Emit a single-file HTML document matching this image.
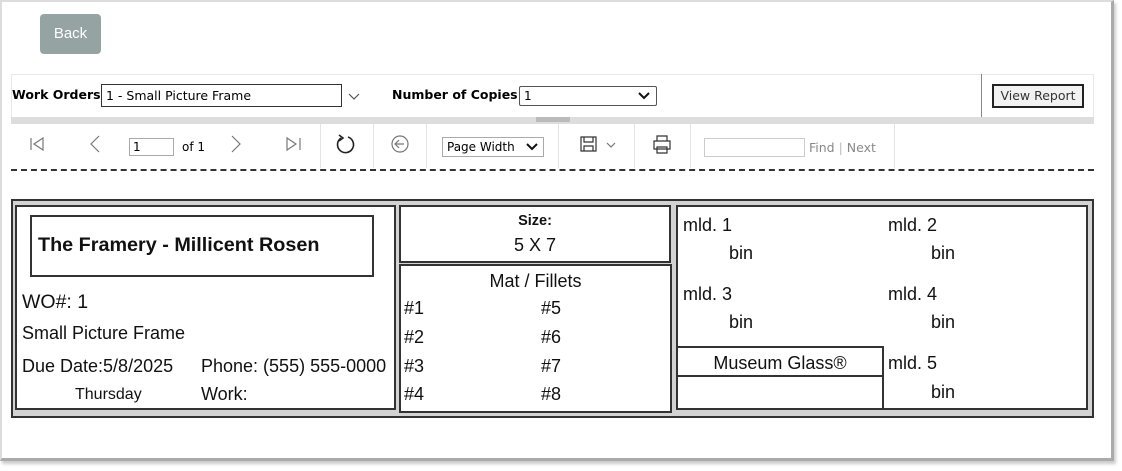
<!DOCTYPE html>
<html><head><style>
*{margin:0;padding:0;box-sizing:border-box}
body{width:1122px;height:471px;background:#fff;position:relative;overflow:hidden;font-family:"Liberation Sans",sans-serif}
.a{position:absolute}
.t{font-family:"DejaVu Sans","Liberation Sans",sans-serif;font-size:12px;color:#000}
.b{border:2px solid #333;background:#fff}
.r{font-family:"Liberation Sans",Arial,sans-serif;font-size:18px;color:#111;position:absolute;white-space:nowrap}
.sep{position:absolute;top:124px;width:1px;height:44px;background:#e4e4e4}
</style></head><body>
<div class="a" style="left:0;top:0;width:1114px;height:461px;border:2px solid #dcdcdc;border-right:3px solid #aaa;border-bottom:3px solid #aaa;box-shadow:2px 3px 3px #ccc"></div>
<div class="a" style="left:40px;top:14px;width:61px;height:40px;background:#95a3a3;border-radius:4px;color:#fff;font-size:15px;text-align:center;line-height:40px">Back</div>

<div class="a" style="left:11px;top:74px;width:1083px;height:45px;border:1px solid #e8e8e8;border-bottom:none"></div>
<div class="a" style="left:11px;top:117px;width:1083px;height:7px;background:#ddd"></div>
<div class="a" style="left:536px;top:117px;width:34px;height:5px;background:#bbb"></div>
<div class="a" style="left:981px;top:74px;width:1px;height:43px;background:#888"></div>
<div class="a t" style="left:12px;top:87px;font-weight:bold;font-size:12.5px">Work Orders</div>
<div class="a t" style="left:101px;top:84px;width:241px;height:23px;border:1px solid #333;padding:3px 4px;font-size:12.5px">1 - Small Picture Frame</div>
<svg class="a" style="left:347px;top:92px" width="14" height="10"><path d="M2 2l5 5 5-5" stroke="#555" fill="none" stroke-width="1.2"/></svg>
<div class="a t" style="left:392px;top:87px;font-weight:bold;font-size:12.5px">Number of Copies</div>
<div class="a t" style="left:519px;top:86px;width:138px;height:20px;border:1px solid #555;border-radius:2px;padding:2px 4px">1</div>
<svg class="a" style="left:637px;top:91px" width="14" height="10"><path d="M2 2l5 5 5-5" stroke="#111" fill="none" stroke-width="2"/></svg>
<div class="a t" style="left:992px;top:84px;width:92px;height:24px;border:2px solid #222;background:#f2f2f2;text-align:center;line-height:20px;color:#333;font-size:12.5px">View Report</div>

<div class="sep" style="left:320px"></div><div class="sep" style="left:373px"></div><div class="sep" style="left:426px"></div><div class="sep" style="left:558px"></div><div class="sep" style="left:634px"></div><div class="sep" style="left:690px"></div><div class="sep" style="left:894px"></div>
<svg class="a" style="left:0;top:124px" width="720" height="44">
<g stroke="#777" fill="none" stroke-width="1.2">
<path d="M31 14v12M43 14l-9 6 9 6z"/>
<path d="M99 12l-8 8 8 8"/>
<path d="M232 12l8 8-8 8"/>
<path d="M287 14l9 6-9 6zM300 14v12"/>
<circle cx="400" cy="20" r="8"/><path d="M404 20h-8M399 16l-4 4 4 4"/>
<path d="M581 13h15v14h-15zM584 13v5h9v-5M584 27v-5h9v5" stroke="#333"/>
<path d="M607 19l4 4 4-4"/>
<path d="M657 17v-5h10v5M654 17h16v8h-16zM657 23h10v6h-10z" stroke="#333"/>
</g>
<path d="M341 14a8 8 0 1 0 7 -1" stroke="#222" stroke-width="1.6" fill="none"/><path d="M339 11l4 3-4 3" stroke="#222" stroke-width="1.6" fill="none"/>
</svg>
<div class="a t" style="left:129px;top:138px;width:45px;height:18px;border:1px solid #aaa;padding:1px 3px">1</div>
<div class="a t" style="left:182px;top:140px">of 1</div>
<div class="a t" style="left:442px;top:137px;width:102px;height:20px;border:1px solid #aaa;padding:2px 4px">Page Width</div>
<svg class="a" style="left:525px;top:142px" width="14" height="10"><path d="M2 2l5 5 5-5" stroke="#111" fill="none" stroke-width="2"/></svg>
<div class="a t" style="left:704px;top:138px;width:101px;height:19px;border:1px solid #ccc"></div>
<div class="a t" style="left:809px;top:140px;color:#888;font-size:12.5px">Find <span style="color:#bbb">|</span> Next</div>
<div class="a" style="left:11px;top:169px;width:1083px;border-top:2px dashed #333"></div>

<div class="a" style="left:11px;top:199px;width:1083px;height:219px;background:#d3d3d3;border:2px solid #333"></div>
<div class="a b" style="left:15px;top:205px;width:381px;height:205px"></div>
<div class="a b" style="left:30px;top:215px;width:344px;height:62px;border-width:2px"></div>
<div class="r" style="left:38px;top:234px;font-weight:bold;font-size:19.8px">The Framery - Millicent Rosen</div>
<div class="r" style="left:22px;top:291px;font-size:19.5px">WO#: 1</div>
<div class="r" style="left:22px;top:323px">Small Picture Frame</div>
<div class="r" style="left:22px;top:356px">Due Date:5/8/2025</div>
<div class="r" style="left:201px;top:356px">Phone: (555) 555-0000</div>
<div class="r" style="left:75px;top:386px;font-size:16px">Thursday</div>
<div class="r" style="left:201px;top:384px">Work:</div>

<div class="a b" style="left:399px;top:205px;width:272px;height:58px"></div>
<div class="r" style="left:399px;top:213px;width:272px;text-align:center;font-weight:bold;font-size:14.5px">Size:</div>
<div class="r" style="left:399px;top:235px;width:272px;text-align:center">5 X 7</div>
<div class="a b" style="left:399px;top:264px;width:273px;height:149px"></div>
<div class="r" style="left:399px;top:271px;width:273px;text-align:center">Mat / Fillets</div>
<div class="r" style="left:404px;top:298px">#1</div><div class="r" style="left:541px;top:298px">#5</div>
<div class="r" style="left:404px;top:327px">#2</div><div class="r" style="left:541px;top:327px">#6</div>
<div class="r" style="left:404px;top:356px">#3</div><div class="r" style="left:541px;top:356px">#7</div>
<div class="r" style="left:404px;top:384px">#4</div><div class="r" style="left:541px;top:384px">#8</div>

<div class="a b" style="left:676px;top:205px;width:412px;height:205px"></div>
<div class="a" style="left:677px;top:346px;width:207px;height:63px;border-top:2px solid #333;border-right:2px solid #333"></div>
<div class="a" style="left:677px;top:375px;width:206px;height:2px;background:#333"></div>
<div class="r" style="left:677px;top:353px;width:206px;text-align:center">Museum Glass®</div>
<div class="r" style="left:683px;top:215px">mld. 1</div><div class="r" style="left:888px;top:215px">mld. 2</div>
<div class="r" style="left:729px;top:243px">bin</div><div class="r" style="left:931px;top:243px">bin</div>
<div class="r" style="left:683px;top:284px">mld. 3</div><div class="r" style="left:888px;top:284px">mld. 4</div>
<div class="r" style="left:729px;top:312px">bin</div><div class="r" style="left:931px;top:312px">bin</div>
<div class="r" style="left:888px;top:353px">mld. 5</div>
<div class="r" style="left:931px;top:382px">bin</div>
</body></html>
